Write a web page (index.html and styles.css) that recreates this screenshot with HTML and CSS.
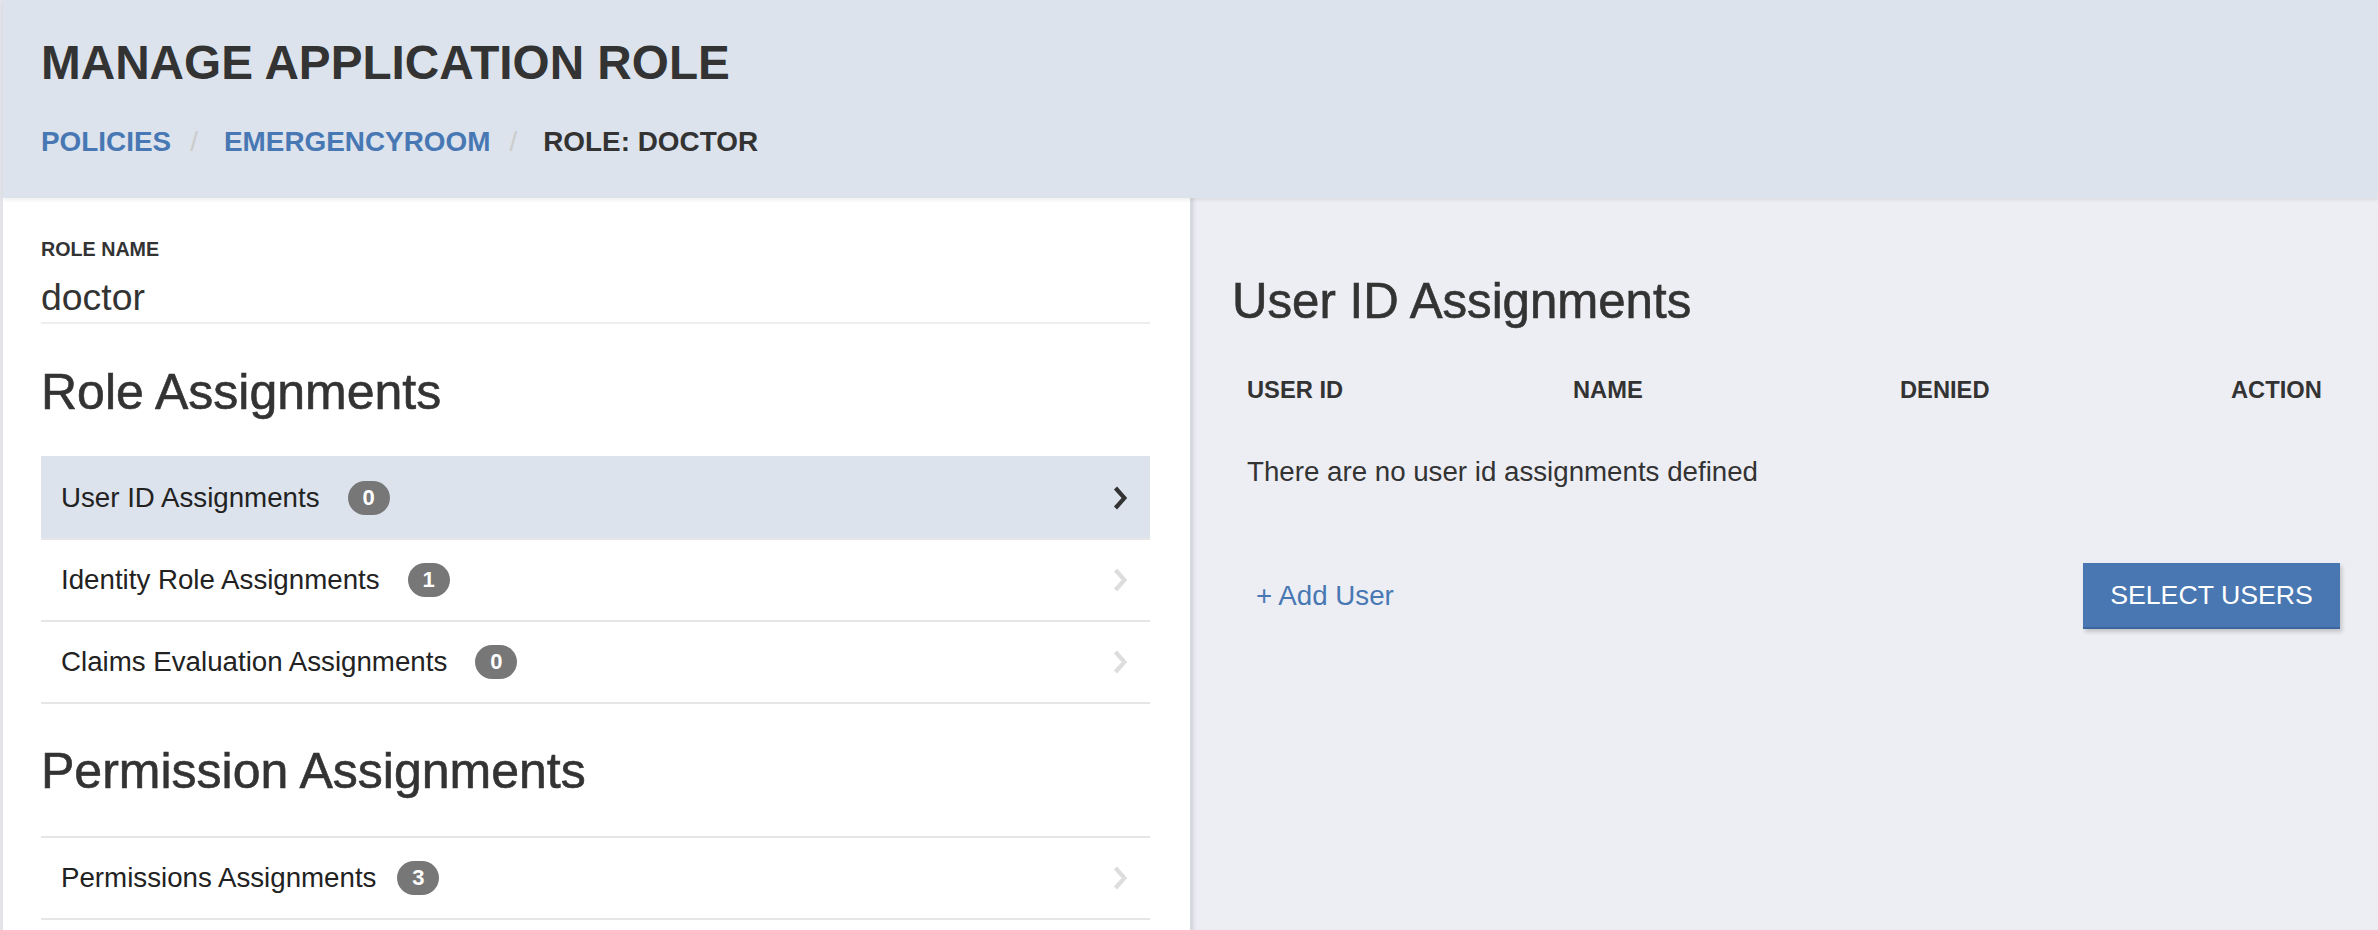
FILE: index.html
```html
<!DOCTYPE html>
<html lang="en">
<head>
<meta charset="utf-8">
<title>Manage Application Role</title>
<link rel="stylesheet" href="styles.css">
</head>
<body>
<div class="app">
  <header class="page-header">
    <h1 class="page-title">MANAGE APPLICATION ROLE</h1>
    <nav class="breadcrumb">
      <a class="crumb crumb-link" href="#">POLICIES</a>
      <a class="crumb crumb-link" href="#">EMERGENCYROOM</a>
      <span class="crumb crumb-current">ROLE: DOCTOR</span>
    </nav>
  </header>

  <main class="main">
    <section class="left-panel">
      <div class="field">
        <div class="field-label">ROLE NAME</div>
        <div class="field-value">doctor</div>
      </div>

      <h2 class="section-title section-title-first">Role Assignments</h2>
      <ul class="list">
        <li class="list-item is-active">
          <span class="item-text">User ID Assignments</span>
          <span class="badge">0</span>
          <svg class="chevron" viewBox="0 0 14 24" width="14" height="24"><path d="M2.5 2 L11.5 12 L2.5 22" /></svg>
        </li>
        <li class="list-item">
          <span class="item-text">Identity Role Assignments</span>
          <span class="badge">1</span>
          <svg class="chevron" viewBox="0 0 14 24" width="14" height="24"><path d="M2.5 2 L11.5 12 L2.5 22" /></svg>
        </li>
        <li class="list-item">
          <span class="item-text">Claims Evaluation Assignments</span>
          <span class="badge">0</span>
          <svg class="chevron" viewBox="0 0 14 24" width="14" height="24"><path d="M2.5 2 L11.5 12 L2.5 22" /></svg>
        </li>
      </ul>

      <h2 class="section-title section-title-second">Permission Assignments</h2>
      <ul class="list list-perm">
        <li class="list-item">
          <span class="item-text">Permissions Assignments</span>
          <span class="badge badge-tight">3</span>
          <svg class="chevron" viewBox="0 0 14 24" width="14" height="24"><path d="M2.5 2 L11.5 12 L2.5 22" /></svg>
        </li>
      </ul>
    </section>

    <section class="right-panel">
      <h2 class="detail-title">User ID Assignments</h2>
      <div class="table-head">
        <div class="th">USER ID</div>
        <div class="th">NAME</div>
        <div class="th">DENIED</div>
        <div class="th">ACTION</div>
      </div>
      <p class="empty">There are no user id assignments defined</p>
      <div class="actions">
        <a class="add-link" href="#">+ Add User</a>
        <button class="btn-primary" type="button">SELECT USERS</button>
      </div>
    </section>
  </main>
</div>
</body>
</html>
```

FILE: styles.css
```css
* {
  box-sizing: border-box;
}

html, body {
  margin: 0;
  padding: 0;
}

body {
  font-family: "Liberation Sans", Arial, Helvetica, sans-serif;
  color: #333333;
  background: #edeef3;
}

.app {
  min-height: 100vh;
  display: flex;
  flex-direction: column;
  border-left: 3px solid #e2e4e9;
}

/* ---------- header ---------- */
.page-header {
  position: relative;
  z-index: 1;
  height: 198px;
  padding: 37px 0 0 38px;
  background: #dce3ed;
  box-shadow: 0 2px 4px rgba(0, 0, 0, 0.07);
}

.page-title {
  margin: 0;
  font-size: 47.7px;
  line-height: 52px;
  font-weight: bold;
  color: #333333;
}

.breadcrumb {
  margin-top: 38px;
  display: flex;
  font-size: 27.9px;
  line-height: 30px;
  font-weight: bold;
}

.crumb {
  text-decoration: none;
}

.crumb + .crumb::before {
  content: "/";
  padding: 0 26px 0 19px;
  font-weight: normal;
  color: #cccccc;
}

.crumb-link {
  color: #4878b4;
}

.crumb-current {
  color: #333333;
}

/* ---------- main ---------- */
.main {
  flex: 1;
  display: grid;
  grid-template-columns: 1187px 1fr;
}

.left-panel {
  background: #ffffff;
  padding: 40px 40px 0 38px;
}

.field-label {
  font-size: 19.7px;
  line-height: 22px;
  font-weight: bold;
  color: #333333;
}

.field-value {
  margin-top: 15px;
  padding-bottom: 3px;
  font-size: 37.4px;
  line-height: 44px;
  color: #333333;
  border-bottom: 2px solid #eeeeee;
}

.section-title {
  margin: 0;
  font-size: 50px;
  line-height: 52px;
  font-weight: normal;
  color: #333333;
  -webkit-text-stroke: 0.6px #333333;
}

.section-title-first {
  margin-top: 42px;
}

.section-title-second {
  margin-top: 41px;
}

.list {
  list-style: none;
  margin: 38px 0 0 0;
  padding: 0;
  border-bottom: 2px solid #e6e6e6;
}

.list-perm {
  margin-top: 39px;
}

.list-item {
  display: flex;
  align-items: center;
  height: 82px;
  padding: 0 23px 0 20px;
  border-top: 2px solid #e6e6e6;
  font-size: 27.7px;
  color: #222222;
}

.list-item.is-active {
  background: #dce3ed;
  border-top-color: #dce3ed;
}

.item-text {
  line-height: 32px;
}

.badge {
  display: inline-flex;
  align-items: center;
  justify-content: center;
  min-width: 42px;
  height: 34px;
  margin-left: 28px;
  padding: 0 12px;
  border-radius: 17px;
  background: #777777;
  color: #ffffff;
  font-size: 22px;
  font-weight: bold;
}

.badge-tight {
  margin-left: 21px;
}

.chevron {
  margin-left: auto;
  fill: none;
  stroke: #dddddd;
  stroke-width: 4.2;
  stroke-linecap: butt;
  stroke-linejoin: miter;
}

.list-item.is-active .chevron {
  stroke: #333333;
}

/* ---------- right panel ---------- */
.right-panel {
  background: #edeef3;
  border-left: 3px solid #d6d9e0;
  box-shadow: inset 3px 0 4px -2px rgba(0, 0, 0, 0.08);
  padding: 75px 38px 0 39px;
}

.detail-title {
  margin: 0;
  font-size: 49.2px;
  line-height: 56px;
  font-weight: normal;
  color: #333333;
  -webkit-text-stroke: 0.6px #333333;
}

.table-head {
  margin-top: 47px;
  display: grid;
  grid-template-columns: 326px 327px 331px 1fr;
}

.th {
  padding: 0 15px;
  font-size: 23.7px;
  line-height: 28px;
  font-weight: bold;
  color: #333333;
}

.empty {
  margin: 52px 0 0 0;
  padding: 0 15px;
  font-size: 27.7px;
  line-height: 32px;
  color: #333333;
}

.actions {
  margin-top: 75px;
  display: flex;
  align-items: center;
  justify-content: space-between;
}

.add-link {
  margin-left: 24px;
  font-size: 27.7px;
  line-height: 32px;
  color: #4878b4;
  text-decoration: none;
}

.btn-primary {
  height: 66px;
  width: 257px;
  padding: 0;
  font-family: "Liberation Sans", Arial, Helvetica, sans-serif;
  font-size: 26.7px;
  color: #ffffff;
  background: #4977b2;
  border: 0;
  border-bottom: 2px solid #3b659c;
  border-radius: 0;
  box-shadow: 2px 3px 4px rgba(0, 0, 0, 0.18);
}
```
